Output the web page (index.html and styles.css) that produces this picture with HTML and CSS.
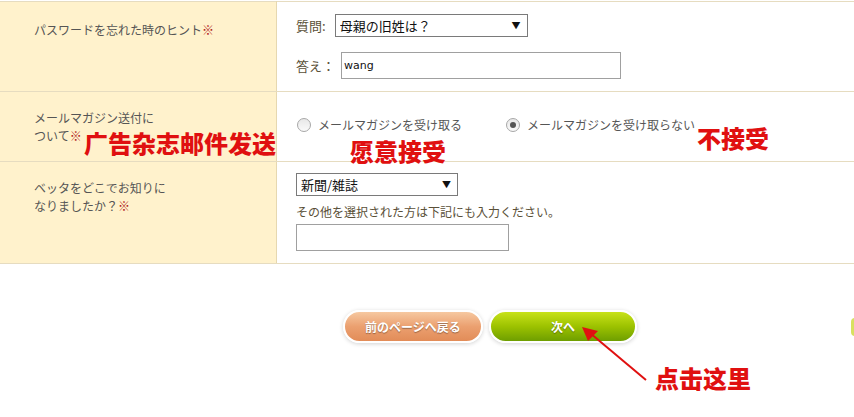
FILE: index.html
```html
<!DOCTYPE html>
<html lang="ja">
<head>
    <meta charset="UTF-8">
    <title>会員登録</title>
    <link rel="stylesheet" href="styles.css">
</head>
<body>
    <div class="page">
        <table class="form-table">
            <tr class="row-hint">
                <th>パスワードを忘れた時のヒント<span class="req">※</span></th>
                <td>
                    <div class="field">
                        <span class="label">質問:</span>
                        <span class="select-wrap q-select">
                            <select class="select">
                                <option>母親の旧姓は？</option>
                            </select>
                            <span class="arrow">▼</span>
                        </span>
                    </div>
                    <div class="field answer">
                        <span class="label">答え：</span>
                        <input class="text answer-input" type="text" value="wang">
                    </div>
                </td>
            </tr>
            <tr class="row-mail">
                <th>メールマガジン送付に<br>ついて<span class="req">※</span></th>
                <td>
                    <div class="radios">
                        <label class="radio"><span class="dot"></span>メールマガジンを受け取る</label>
                        <label class="radio"><span class="dot on"></span>メールマガジンを受け取らない</label>
                    </div>
                </td>
            </tr>
            <tr class="row-source">
                <th>ベッタをどこでお知りに<br>なりましたか？<span class="req">※</span></th>
                <td>
                    <span class="select-wrap src-select">
                        <select class="select">
                            <option>新聞/雑誌</option>
                        </select>
                        <span class="arrow">▼</span>
                    </span>
                    <p class="note">その他を選択された方は下記にも入力ください。</p>
                    <input class="text other-input" type="text">
                </td>
            </tr>
        </table>

        <div class="actions">
            <button class="btn btn-back">前のページへ戻る</button>
            <button class="btn btn-next">次へ</button>
        </div>

        <!-- annotations on top of the screenshot -->
        <span class="note-red n1">广告杂志邮件发送</span>
        <span class="note-red n2">愿意接受</span>
        <span class="note-red n3">不接受</span>
        <span class="note-red n4">点击这里</span>
        <svg class="pointer" width="80" height="60" viewBox="0 0 80 60">
            <line x1="66" y1="55" x2="10" y2="8" stroke="#e01010" stroke-width="2"/>
            <polygon points="2,2 18,6 8,16" fill="#e01010"/>
        </svg>
        <span class="edge"></span>
    </div>
</body>
</html>
```

FILE: styles.css
```css
body {
    margin: 0;
    background: #fff;
    font-family: "Noto Sans CJK JP", "Liberation Sans", sans-serif;
    font-size: 12px;
    color: #555;
}
.page {
    position: relative;
    width: 854px;
    height: 417px;
    overflow: hidden;
    padding-top: 1px;
    box-sizing: border-box;
}
.form-table {
    width: 100%;
    border-collapse: collapse;
}
.form-table th,
.form-table td {
    border-top: 1px solid #e6dcc0;
    border-bottom: 1px solid #e6dcc0;
    vertical-align: top;
    text-align: left;
}
.form-table th {
    width: 242px;
    background: #fff2cc;
    border-right: 1px solid #e6d8b0;
    font-weight: normal;
    color: #555;
    padding: 19px 0 0 34px;
    line-height: 18px;
}
.form-table td {
    padding: 0 0 0 19px;
    color: #4a4230;
}
.req {
    color: #b02020;
}
.row-hint { height: 90px; }
.row-mail { height: 70px; }
.row-source { height: 102px; }
.row-mail th { padding-top: 17px; }
.row-source th { padding-top: 17px; }

.field {
    display: flex;
    align-items: center;
}
.row-hint td { padding-top: 12px; }
.label {
    font-size: 13px;
    color: #5a5038;
    margin-right: 9px;
}
.answer {
    margin-top: 15px;
}
.answer .label { margin-right: 6px; }
.select-wrap {
    position: relative;
    display: inline-block;
}
.select {
    appearance: none;
    -webkit-appearance: none;
    border: 1px solid #7a7a7a;
    background: #fff;
    height: 23px;
    font-family: "Noto Sans CJK JP", sans-serif;
    font-size: 13px;
    color: #111;
    padding: 0 4px;
    border-radius: 0;
}
.arrow {
    position: absolute;
    right: 7px;
    top: 5px;
    font-size: 9px;
    color: #111;
}
.q-select .select { width: 193px; }
.src-select .select { width: 162px; }
.text {
    border: 1px solid #a0a0a0;
    height: 27px;
    box-sizing: border-box;
    font-family: "DejaVu Sans", sans-serif;
    font-size: 11px;
    padding: 0 2px;
    color: #111;
}
.answer-input { width: 280px; }

.row-mail td { padding-top: 26px; padding-left: 20px; }
.radios {
    display: flex;
    gap: 44px;
}
.radio {
    display: flex;
    align-items: center;
    color: #555;
    font-size: 12px;
    line-height: 14px;
}
.dot {
    width: 12px;
    height: 12px;
    border: 1px solid #a8a8a8;
    border-radius: 50%;
    background: linear-gradient(#e8e8e8, #fafafa);
    margin-right: 7px;
    position: relative;
}
.dot.on::after {
    content: "";
    position: absolute;
    left: 3px;
    top: 3px;
    width: 6px;
    height: 6px;
    border-radius: 50%;
    background: #555;
}

.row-source td { padding-top: 11px; }
.note {
    margin: 7px 0 4px;
    font-size: 12px;
    color: #5a5038;
}
.other-input { width: 213px; }

.actions {
    display: flex;
    gap: 6px;
    margin-top: 46px;
    padding-left: 343px;
}
.btn {
    height: 33px;
    border: 2px solid #fff;
    border-radius: 17px;
    color: #fff;
    font-family: "Noto Sans CJK JP", sans-serif;
    font-size: 12px;
    font-weight: bold;
    text-shadow: 0 1px 1px rgba(0, 0, 0, 0.35);
    box-shadow: 0 1px 4px rgba(0, 0, 0, 0.18);
}
.btn-back {
    width: 140px;
    background: linear-gradient(#f6c8a0, #eba070 50%, #e28c58);
}
.btn-next {
    width: 148px;
    background: linear-gradient(#c8e21a, #9cc200 50%, #6e9e00);
}

.note-red {
    position: absolute;
    color: #e01010;
    font-family: "Noto Sans CJK SC", sans-serif;
    font-weight: 900;
    font-size: 24px;
    line-height: 1;
}
.n1 { left: 84px; top: 131px; }
.n2 { left: 350px; top: 139px; }
.n3 { left: 697px; top: 126px; }
.n4 { left: 655px; top: 366px; }
.pointer {
    position: absolute;
    left: 580px;
    top: 325px;
}
.edge {
    position: absolute;
    left: 851px;
    top: 318px;
    width: 8px;
    height: 18px;
    border-radius: 4px;
    background: #d8e060;
}
```
